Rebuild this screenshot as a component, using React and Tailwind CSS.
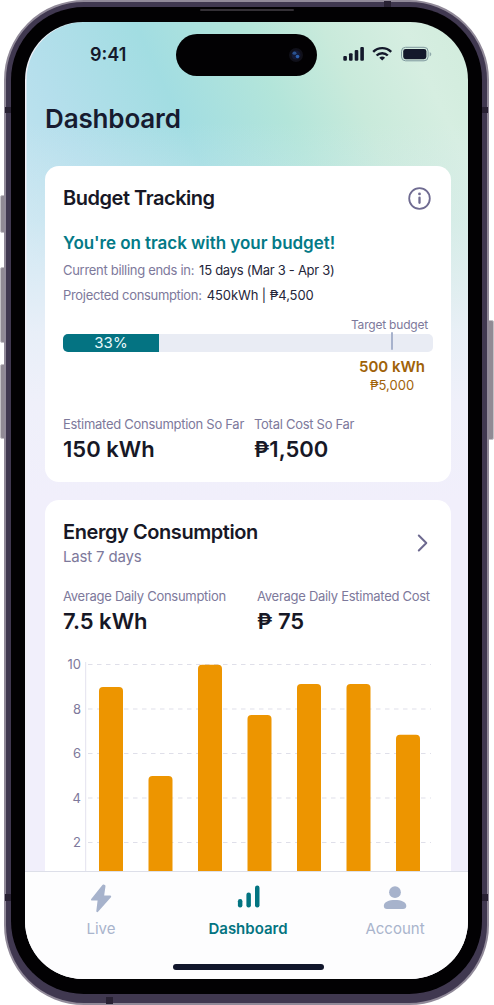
import React from "react";

const bars = [
  { x: 54, y: 27 },
  { x: 103.5, y: 116 },
  { x: 153, y: 4.7 },
  { x: 202.5, y: 55 },
  { x: 252, y: 24 },
  { x: 301.5, y: 24 },
  { x: 351, y: 74.7 },
];

const ticks = [
  { label: "10", y: 4.5 },
  { label: "8", y: 49 },
  { label: "6", y: 93.5 },
  { label: "4", y: 138 },
  { label: "2", y: 182.5 },
];

function StatusBar() {
  return (
    <div className="flex h-[65px] shrink-0 items-center">
      <div className="ml-[65px] w-[85.5px] text-[18px] font-semibold leading-[24px] text-[#14192b]">9:41</div>
      <div className="flex h-[42px] w-[141px] items-center justify-end rounded-full bg-[#020103] pr-[14px]">
        <svg width="14" height="14" viewBox="0 0 14 14">
          <circle cx="7" cy="7" r="7" fill="#10101a" />
          <circle cx="7" cy="7" r="4.5" fill="#131a38" />
          <ellipse cx="5.5" cy="5.2" rx="2" ry="1.6" fill="#29518f" />
          <circle cx="8.5" cy="8.5" r="1.8" fill="#2b5fae" />
        </svg>
      </div>
      <svg className="mb-[2px] ml-[26px]" width="90" height="18" viewBox="0 0 90 18" fill="#14192b">
        <rect x="0.3" y="11" width="3.6" height="4.8" rx="1.1" />
        <rect x="6" y="8.2" width="3.6" height="7.6" rx="1.1" />
        <rect x="11.7" y="4.9" width="3.6" height="10.9" rx="1.1" />
        <rect x="17.3" y="2" width="3.6" height="13.8" rx="1.1" />
        <g fill="none" stroke="#14192b" strokeWidth="2.4">
          <path d="M30.2 6.9C35.2 1.8 43.2 1.8 48.2 6.9" />
          <path d="M33.6 10.5C36.7 7.4 41.7 7.4 44.8 10.5" />
        </g>
        <path d="M39.2 15.6L36.3 12.7C38 11.2 40.4 11.2 42.1 12.7Z" />
        <rect x="58.5" y="2.3" width="26.6" height="13.5" rx="4" fill="none" stroke="#7e989d" strokeWidth="1" />
        <rect x="60.2" y="4" width="23.2" height="10.2" rx="2.4" />
        <path d="M86.7 7v4.4c2.1-.8 2.1-3.6 0-4.4Z" fill="#8fa9aa" />
      </svg>
    </div>
  );
}

function Stat({ label, value }) {
  return (
    <div className="whitespace-nowrap pb-[1px]">
      <div className="text-[13px] leading-[20px] tracking-[-0.28px] text-[#7d799b]">{label}</div>
      <div className="mt-[1px] text-[22px] font-semibold leading-[28px] text-[#171826]">{value}</div>
    </div>
  );
}

function BudgetCard() {
  return (
    <section className="h-[316px] shrink-0 rounded-[14px] bg-white px-[18px] pt-[18px]">
      <div className="flex h-[28px] items-center justify-between">
        <h2 className="text-[20px] font-semibold leading-[28px] tracking-[-0.47px] text-[#171826]">Budget Tracking</h2>
        <svg className="mr-[1px]" width="25" height="25" viewBox="0 0 25 25" fill="none">
          <circle cx="12.5" cy="12.5" r="10.3" stroke="#6f6b91" strokeWidth="1.8" />
          <circle cx="12.5" cy="7.9" r="1.4" fill="#6f6b91" />
          <path d="M12.5 11.7V16.8" stroke="#6f6b91" strokeWidth="2.3" strokeLinecap="round" />
        </svg>
      </div>
      <div className="mt-[19px] text-[17px] font-semibold leading-[24px] tracking-[-0.04px] text-[#037a87]">You're on track with your budget!</div>
      <div className="mt-[5px] flex gap-[5px] whitespace-nowrap text-[13px] leading-[20px]">
        <span className="tracking-[-0.3px] text-[#7d799b]">Current billing ends in:</span>
        <span className="tracking-[-0.27px] text-[#25263a]">15 days (Mar 3 - Apr 3)</span>
      </div>
      <div className="mt-[5px] flex gap-[5px] whitespace-nowrap text-[13px] leading-[20px]">
        <span className="tracking-[-0.32px] text-[#7d799b]">Projected consumption:</span>
        <span className="tracking-[-0.08px] text-[#25263a]">450kWh | ₱4,500</span>
      </div>
      <div className="mt-[12px] flex justify-end pr-[5px] text-[12px] leading-[16px] tracking-[-0.2px] text-[#7d799b]">Target budget</div>
      <div className="relative mt-[1px] h-[18px] rounded-[5px] bg-[#e9ecf4]">
        <div className="h-[18px] w-[96px] rounded-l-[5px] bg-[#047382] text-center text-[15px] leading-[18px] text-[#e9f8fa]">33%</div>
        <div className="absolute left-[328px] top-[-2px] h-[18px] w-[2px] rounded-full bg-[#a7b2cc]" />
      </div>
      <div className="ml-auto mt-[5px] w-[82px] whitespace-nowrap pb-[1px] text-center text-[#a06208]">
        <div className="text-[15px] font-semibold leading-[20px]">500 kWh</div>
        <div className="text-[13px] leading-[17px]">₱5,000</div>
      </div>
      <div className="mt-[19px] grid grid-cols-[191px_1fr]">
        <Stat label="Estimated Consumption So Far" value="150 kWh" />
        <Stat label="Total Cost So Far" value="₱1,500" />
      </div>
    </section>
  );
}

function EnergyChart() {
  return (
    <svg className="mt-[24px] block overflow-visible" width="406" height="215" viewBox="0 0 406 215" fontFamily="Inter, sans-serif">
      <path d="M40.7 2V215" stroke="#e3e2ee" strokeWidth="1" />
      {ticks.map((t) => (
        <g key={t.label}>
          <text x="36" y={t.y + 4.5} textAnchor="end" fontSize="13" fill="#7d799b">
            {t.label}
          </text>
          <path d={`M43 ${t.y}H386`} stroke="#dfdfe9" strokeWidth="1" strokeDasharray="4.5 4.5" />
        </g>
      ))}
      {bars.map((b) => (
        <rect key={b.x} x={b.x} y={b.y} width="24" height="230" rx="4" fill="#ed9500" />
      ))}
    </svg>
  );
}

function EnergyCard() {
  return (
    <section className="mt-[18px] h-[371px] shrink-0 overflow-hidden rounded-t-[14px] bg-white pt-[18px]">
      <div className="flex items-center justify-between px-[18px]">
        <div>
          <h2 className="text-[20px] font-semibold leading-[28px] tracking-[-0.43px] text-[#171826]">Energy Consumption</h2>
          <div className="text-[15px] leading-[22px] tracking-[-0.17px] text-[#7d799b]">Last 7 days</div>
        </div>
        <svg className="mr-[4px]" width="14" height="20" viewBox="0 0 14 20" fill="none">
          <path d="M3.8 2.5L11.3 10L3.8 17.5" stroke="#6f6b91" strokeWidth="2" strokeLinecap="round" strokeLinejoin="round" />
        </svg>
      </div>
      <div className="mt-[18px] grid grid-cols-[194px_1fr] pl-[18px]">
        <Stat label="Average Daily Consumption" value="7.5 kWh" />
        <Stat label="Average Daily Estimated Cost" value="₱ 75" />
      </div>
      <EnergyChart />
    </section>
  );
}

function Tab({ label, active, children }) {
  return (
    <div className="flex w-[147px] flex-col items-center">
      <svg width="30" height="30" viewBox="0 0 30 30">
        {children}
      </svg>
      <div className={active ? "mt-[5px] text-[15px] font-semibold leading-[22px] text-[#037481]" : "mt-[5px] text-[15px] leading-[22px] text-[#a9b4cc]"}>
        {label}
      </div>
    </div>
  );
}

function TabBar() {
  return (
    <nav className="flex h-[108px] shrink-0 flex-col items-center border-t border-[#dddfe9] bg-[#fdfdfe] pl-[3px]">
      <div className="flex pt-[11px]">
        <Tab label="Live">
          <path d="M17.2 2.5L6 16.6H12.7L11.3 28.2L24.2 13.6H17L18.5 3Z" fill="#a7b3cc" stroke="#a7b3cc" strokeWidth="2" strokeLinejoin="round" />
        </Tab>
        <Tab label="Dashboard" active>
          <g fill="#037481">
            <rect x="4.9" y="16" width="4.5" height="8.5" rx="2.2" />
            <rect x="13.4" y="9.5" width="4.5" height="15" rx="2.2" />
            <rect x="22" y="2.5" width="4.5" height="22" rx="2.2" />
          </g>
        </Tab>
        <Tab label="Account">
          <g fill="#a7b3cc">
            <circle cx="15" cy="9.2" r="5.9" />
            <path d="M3.8 23c0-4.2 5.2-6 11.2-6s11.3 1.8 11.3 6c0 2-1.3 3-3.2 3H7c-2 0-3.2-1-3.2-3Z" />
          </g>
        </Tab>
      </div>
      <div className="mt-[24px] h-[6px] w-[151px] rounded-full bg-[#11162b]" />
    </nav>
  );
}

export default function App() {
  return (
    <div className="relative h-[1005px] w-[494px] overflow-hidden bg-white font-['Inter',sans-serif]">
      <div className="absolute left-0 top-[195px] h-[38px] w-[6px] rounded-l-[2px] border border-[#c4c1c6] bg-[#908a94]" />
      <div className="absolute left-0 top-[267px] h-[76px] w-[6px] rounded-l-[2px] border border-[#c4c1c6] bg-[#908a94]" />
      <div className="absolute left-0 top-[364px] h-[75px] w-[6px] rounded-l-[2px] border border-[#c4c1c6] bg-[#908a94]" />
      <div className="absolute left-[487px] top-[320px] h-[120px] w-[7px] rounded-r-[2px] border border-[#c4c1c6] bg-[#908a94]" />
      <div className="relative ml-[4px] h-[1005px] w-[485px] rounded-[80px] border-[2px] border-[#918a99] bg-[#403850] p-[5px]">
        <div className="absolute left-[378px] top-[-1px] h-[7px] w-[7px] bg-[#282133]" />
        <div className="absolute bottom-[-1px] left-[100px] h-[7px] w-[7px] bg-[#282133]" />
        <div className="absolute left-[-1px] top-[105px] h-[6px] w-[7px] bg-[#282133]" />
        <div className="absolute right-[-1px] top-[105px] h-[6px] w-[7px] bg-[#282133]" />
        <div className="absolute left-[-1px] top-[892px] h-[7px] w-[7px] bg-[#282133]" />
        <div className="absolute right-[-1px] top-[892px] h-[7px] w-[7px] bg-[#282133]" />
        <div className="relative h-[987px] rounded-[73px] bg-[#020103] pl-[14px] pr-[14px] pt-[15px]">
          <div className="absolute left-[189px] top-[2px] h-[2px] w-[94px] rounded-full bg-[#343036]" />
          <main className="flex h-[957px] w-[443px] flex-col overflow-hidden rounded-[58px] bg-[#f1effb] bg-[linear-gradient(to_bottom,transparent_0px,transparent_100px,rgba(226,238,246,0.4)_200px,rgba(236,240,249,0.9)_310px,#eff0fa_380px,#f1effb_480px),linear-gradient(65deg,#c4e4f0_18%,#b5dfec_32%,#a2dde2_50%,#b3e5da_66%,#c9eadb_78%,#d6eee1_90%,#d2ecdd_98%)] bg-[length:100%_480px] bg-no-repeat shadow-[inset_1.5px_0_0_#f1eff6]">
            <StatusBar />
            <h1 className="mb-[29px] ml-[20px] mt-[14px] text-[26px] font-semibold leading-[36px] tracking-[-0.15px] text-[#171b30]">Dashboard</h1>
            <div className="flex h-[705px] shrink-0 flex-col pl-[20px] pr-[17px]">
              <BudgetCard />
              <EnergyCard />
            </div>
            <TabBar />
          </main>
        </div>
      </div>
    </div>
  );
}
